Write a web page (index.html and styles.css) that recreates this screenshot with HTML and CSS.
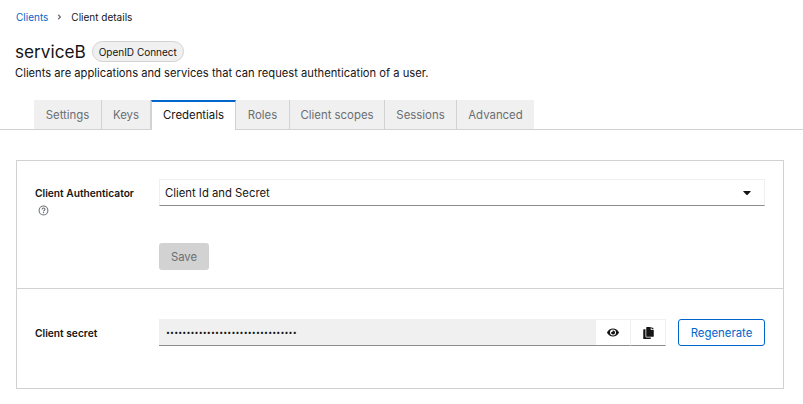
FILE: index.html
```html
<!DOCTYPE html>
<html lang="en">
<head>
<meta charset="utf-8">
<title>Client details</title>
<link rel="stylesheet" href="styles.css">
</head>
<body>
<nav class="breadcrumb">
  <a class="crumb-link" href="#">Clients</a>
  <svg class="crumb-sep" viewBox="0 0 256 512" aria-hidden="true"><path d="M224.300 273l-136 136c-9.400 9.400-24.600 9.400-33.900 0l-22.600-22.600c-9.400-9.400-9.400-24.600 0-33.900l96.400-96.400-96.400-96.400c-9.400-9.400-9.400-24.600 0-33.900L54.300 103c9.400-9.400 24.600-9.400 33.900 0l136 136c9.500 9.400 9.500 24.600.1 34z"/></svg>
  <span class="crumb-current">Client details</span>
</nav>
<header class="heading">
  <div class="title-row">
    <h1 class="title">serviceB</h1>
    <span class="badge">OpenID Connect</span>
  </div>
  <p class="subtitle">Clients are applications and services that can request authentication of a user.</p>
</header>
<div class="tabs">
  <span class="tab tab-1">Settings</span>
  <span class="tab tab-2">Keys</span>
  <span class="tab tab-active">Credentials</span>
  <span class="tab tab-4">Roles</span>
  <span class="tab tab-5">Client scopes</span>
  <span class="tab tab-6">Sessions</span>
  <span class="tab tab-7">Advanced</span>
</div>
<main class="content">
  <section class="card">
    <div class="card-top">
      <div class="label-col">
        <span class="label">Client Authenticator</span>
        <svg class="help" viewBox="0 0 16 16" aria-hidden="true"><circle cx="8" cy="8" r="6.400" fill="none" stroke="currentColor" stroke-width="1.500"/><path d="M5.900 6.500c0-1.300 1-2.100 2.200-2.100s2.100.8 2.100 1.900c0 1.700-2.100 1.600-2.100 3.100" fill="none" stroke="currentColor" stroke-width="1.500"/><rect x="7.200" y="10.300" width="1.700" height="1.600"/></svg>
      </div>
      <div class="field-col">
        <div class="select">
          <span>Client Id and Secret</span>
          <svg class="caret" viewBox="0 0 320 512" aria-hidden="true"><path d="M31.300 192h257.300c17.800 0 26.700 21.500 14.100 34.100L174.100 354.800c-7.800 7.800-20.500 7.800-28.300 0L17.200 226.100C4.600 213.500 13.500 192 31.300 192z"/></svg>
        </div>
        <button class="save" type="button">Save</button>
      </div>
    </div>
    <div class="card-bottom">
      <span class="label label-secret">Client secret</span>
      <div class="secret-group">
        <div class="secret-input">••••••••••••••••••••••••••••••••</div>
        <span class="icon-btn">
          <svg class="eye" viewBox="0 0 576 512" aria-hidden="true"><path d="M572.520 241.400C518.290 135.590 410.930 64 288 64S57.680 135.640 3.480 241.410a32.350 32.350 0 0 0 0 29.190C57.710 376.410 165.070 448 288 448s230.320-71.640 284.520-177.410a32.350 32.350 0 0 0 0-29.190zM288 400a144 144 0 1 1 144-144 143.930 143.930 0 0 1-144 144zm0-240a95.310 95.310 0 0 0-25.310 3.790 47.850 47.850 0 0 1-66.900 66.900A95.780 95.780 0 1 0 288 160z"/></svg>
        </span>
        <span class="icon-btn">
          <svg class="copy" viewBox="0 0 448 512" aria-hidden="true"><path d="M320 448v40c0 13.255-10.745 24-24 24H24c-13.255 0-24-10.745-24-24V120c0-13.255 10.745-24 24-24h72v296c0 30.879 25.121 56 56 56h168zm0-344V0H152c-13.255 0-24 10.745-24 24v368c0 13.255 10.745 24 24 24h272c13.255 0 24-10.745 24-24V128H344c-13.200 0-24-10.800-24-24zm120.971-31.029L375.029 7.029A24 24 0 0 0 358.059 0H352v96h96v-6.059a24 24 0 0 0-7.029-16.970z"/></svg>
        </span>
        <button class="regen" type="button">Regenerate</button>
      </div>
    </div>
  </section>
</main>
</body>
</html>
```
FILE: styles.css
```css
* { box-sizing: border-box; }
html, body { margin: 0; padding: 0; }
body {
  width: 803px;
  height: 404px;
  overflow: hidden;
  background: #fff;
  color: #151515;
  font-family: "Inter", "Liberation Sans", sans-serif;
  font-size: 12px;
}
.breadcrumb {
  display: flex;
  align-items: center;
  height: 16px;
  margin: 9px 16px 0;
  font-size: 10px;
  line-height: 16px;
}
.crumb-link { color: #06c; text-decoration: none; }
.crumb-sep { width: 5px; height: 8px; margin: 0 9px; fill: #6a6e73; }
.heading { margin: 16px 16px 0 15px; }
.title-row { display: flex; align-items: center; height: 21px; }
.title { margin: 0; font-size: 17.200px; font-weight: 400; line-height: 21px; }
.badge {
  display: inline-flex;
  align-items: center;
  justify-content: center;
  width: 92px;
  height: 21px;
  margin-left: 6px;
  border: 1px solid #d2d2d2;
  border-radius: 11px;
  background: #f0f0f0;
  font-size: 10px;
  white-space: nowrap;
}
.subtitle { margin: 3px 0 0; font-size: 11.200px; line-height: 17px; }
.tabs {
  display: flex;
  height: 30px;
  margin-top: 18px;
  padding-left: 34px;
  border-bottom: 1px solid #d2d2d2;
}
.tab {
  display: flex;
  align-items: center;
  justify-content: center;
  height: 29px;
  border-right: 1px solid #d2d2d2;
  background: #f0f0f0;
  color: #6a6e73;
  font-size: 11.400px;
}
.tab-1 { width: 68px; }
.tab-2 { width: 49px; }
.tab-4 { width: 54px; }
.tab-5 { width: 95px; }
.tab-6 { width: 72px; }
.tab-7 { width: 77px; border-right: 0; }
.tab-active {
  width: 85px;
  height: 30px;
  padding-bottom: 2px;
  border-top: 2px solid #06c;
  border-left: 1px solid #d2d2d2;
  background: #fff;
  color: #151515;
}
.content { padding: 30px 19px 0 16px; }
.card { border: 1px solid #d2d2d2; height: 229px; }
.card-top {
  display: flex;
  height: 128px;
  padding: 18px 18px 0;
  border-bottom: 1px solid #d2d2d2;
}
.label-col { display: flex; flex-direction: column; width: 124px; flex: none; padding-top: 7.500px; }
.label { font-size: 10.200px; font-weight: 600; line-height: 13px; }
.help { width: 11px; height: 11px; margin: 5px 0 0 3px; color: #6a6e73; fill: #6a6e73; }
.field-col { flex: 1; display: flex; flex-direction: column; align-items: flex-start; }
.select {
  display: flex;
  align-items: center;
  justify-content: space-between;
  width: 100%;
  height: 27px;
  padding: 0 13px 0 5px;
  border: 1px solid #f0f0f0;
  border-bottom: 1px solid #8a8d90;
  font-size: 11.300px;
}
.caret { width: 8px; height: 13px; fill: #151515; }
.save {
  width: 50px;
  height: 27px;
  margin-top: 37px;
  border: 0;
  border-radius: 3px;
  background: #d2d2d2;
  color: #6a6e73;
  font: inherit;
  font-size: 11.300px;
}
.card-bottom {
  display: flex;
  align-items: center;
  height: 99px;
  padding: 6px 18px 18px;
}
.label-secret { width: 124px; flex: none; padding-top: 1px; }
.secret-group { display: flex; flex: 1; height: 27px; }
.secret-input {
  flex: 1;
  display: flex;
  align-items: center;
  padding-left: 7px;
  border-bottom: 1px solid #8a8d90;
  background: #f0f0f0;
  font-size: 7px;
  letter-spacing: .15px;
}
.icon-btn {
  display: flex;
  align-items: center;
  justify-content: center;
  width: 35px;
  border: 1px solid #f0f0f0;
  border-left: 0;
  border-bottom-color: #8a8d90;
}
.eye { width: 12px; height: 11px; fill: #151515; }
.copy { width: 11px; height: 12px; fill: #151515; }
.regen {
  width: 87px;
  margin-left: 12px;
  border: 1px solid #06c;
  border-radius: 3px;
  background: #fff;
  color: #06c;
  font: inherit;
  font-size: 11.400px;
}
```
